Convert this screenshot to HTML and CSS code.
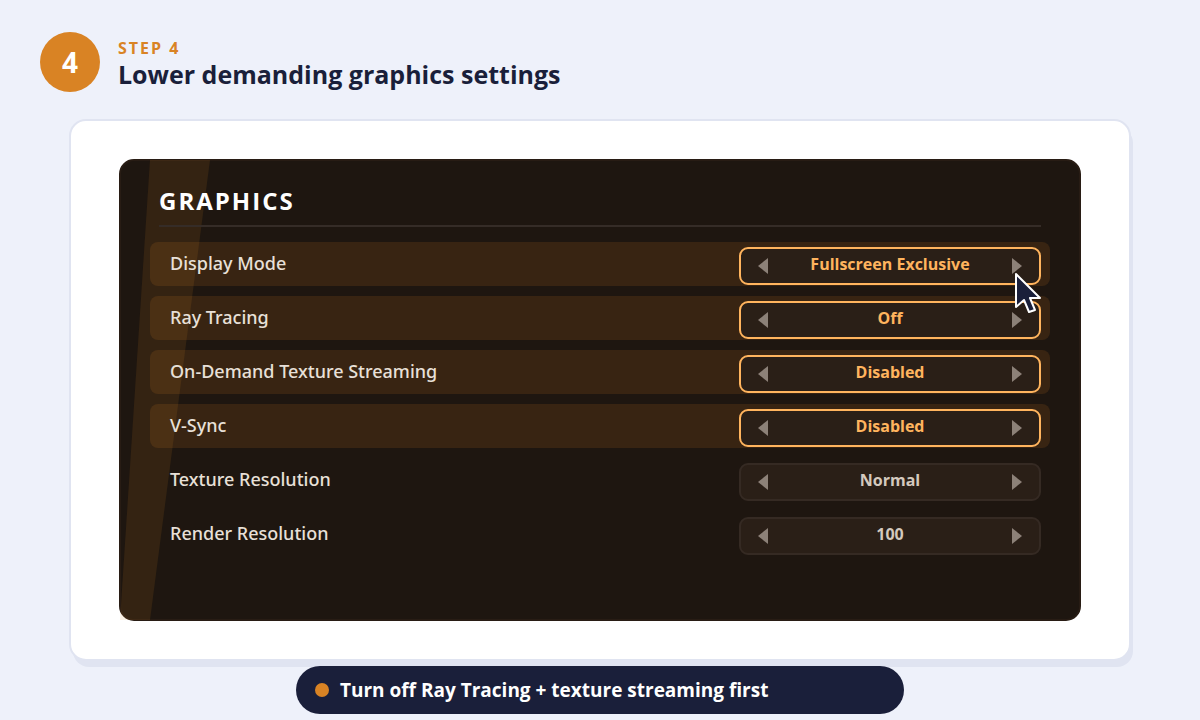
FILE: index.html
```html
<!DOCTYPE html>
<html lang="en">
<head>
    <meta charset="UTF-8">
    <meta name="viewport" content="width=device-width, initial-scale=1.0">
    <title>Step 4 - Lower demanding graphics settings</title>
    <link rel="stylesheet" href="styles.css">
</head>
<body>

    <!-- Step header -->
    <header class="step-header">
        <div class="step-number">4</div>
        <div class="step-text">
            <p class="step-label">STEP 4</p>
            <h1>Lower demanding graphics settings</h1>
        </div>
    </header>

    <!-- Settings card -->
    <main class="card">
        <section class="panel">
            <h2>GRAPHICS</h2>

            <ul class="settings">
                <li class="setting highlight">
                    <span class="setting-name" id="display-mode">Display Mode</span>
                    <div class="stepper" role="group" aria-labelledby="display-mode">
                        <button type="button" class="arrow" aria-label="Previous"><svg width="10" height="16" viewBox="0 0 10 16"><path d="M10 0v16L0 8z"/></svg></button>
                        <output>Fullscreen Exclusive</output>
                        <button type="button" class="arrow" aria-label="Next"><svg width="10" height="16" viewBox="0 0 10 16"><path d="M0 0v16l10-8z"/></svg></button>
                        <svg class="cursor" width="30" height="44" viewBox="0 0 30 44"><path d="M3 3v33l8-7 5 12 6-2-5-12h10z"/></svg>
                    </div>
                </li>
                <li class="setting highlight">
                    <span class="setting-name" id="ray-tracing">Ray Tracing</span>
                    <div class="stepper" role="group" aria-labelledby="ray-tracing">
                        <button type="button" class="arrow" aria-label="Previous"><svg width="10" height="16" viewBox="0 0 10 16"><path d="M10 0v16L0 8z"/></svg></button>
                        <output>Off</output>
                        <button type="button" class="arrow" aria-label="Next"><svg width="10" height="16" viewBox="0 0 10 16"><path d="M0 0v16l10-8z"/></svg></button>
                    </div>
                </li>
                <li class="setting highlight">
                    <span class="setting-name" id="texture-streaming">On-Demand Texture Streaming</span>
                    <div class="stepper" role="group" aria-labelledby="texture-streaming">
                        <button type="button" class="arrow" aria-label="Previous"><svg width="10" height="16" viewBox="0 0 10 16"><path d="M10 0v16L0 8z"/></svg></button>
                        <output>Disabled</output>
                        <button type="button" class="arrow" aria-label="Next"><svg width="10" height="16" viewBox="0 0 10 16"><path d="M0 0v16l10-8z"/></svg></button>
                    </div>
                </li>
                <li class="setting highlight">
                    <span class="setting-name" id="v-sync">V-Sync</span>
                    <div class="stepper" role="group" aria-labelledby="v-sync">
                        <button type="button" class="arrow" aria-label="Previous"><svg width="10" height="16" viewBox="0 0 10 16"><path d="M10 0v16L0 8z"/></svg></button>
                        <output>Disabled</output>
                        <button type="button" class="arrow" aria-label="Next"><svg width="10" height="16" viewBox="0 0 10 16"><path d="M0 0v16l10-8z"/></svg></button>
                    </div>
                </li>
                <li class="setting">
                    <span class="setting-name" id="texture-resolution">Texture Resolution</span>
                    <div class="stepper" role="group" aria-labelledby="texture-resolution">
                        <button type="button" class="arrow" aria-label="Previous"><svg width="10" height="16" viewBox="0 0 10 16"><path d="M10 0v16L0 8z"/></svg></button>
                        <output>Normal</output>
                        <button type="button" class="arrow" aria-label="Next"><svg width="10" height="16" viewBox="0 0 10 16"><path d="M0 0v16l10-8z"/></svg></button>
                    </div>
                </li>
                <li class="setting">
                    <span class="setting-name" id="render-resolution">Render Resolution</span>
                    <div class="stepper" role="group" aria-labelledby="render-resolution">
                        <button type="button" class="arrow" aria-label="Previous"><svg width="10" height="16" viewBox="0 0 10 16"><path d="M10 0v16L0 8z"/></svg></button>
                        <output>100</output>
                        <button type="button" class="arrow" aria-label="Next"><svg width="10" height="16" viewBox="0 0 10 16"><path d="M0 0v16l10-8z"/></svg></button>
                    </div>
                </li>
            </ul>
        </section>
    </main>

    <!-- Tip -->
    <p class="tip">Turn off Ray Tracing + texture streaming first</p>

</body>
</html>
```
FILE: styles.css
```css
* {
    margin: 0;
    padding: 0;
    box-sizing: border-box;
}

body {
    font-family: "Segoe UI", "Open Sans", "Noto Sans", sans-serif;
    background-color: #eef1fa;
    color: #1a1f3a;
}

/* Step header */
.step-header {
    display: flex;
    align-items: center;
    gap: 18px;
    padding: 32px 40px 27px;
}

.step-number {
    display: flex;
    align-items: center;
    justify-content: center;
    width: 60px;
    height: 60px;
    border-radius: 50%;
    background-color: #d98324; /* Orange */
    color: #fff;
    font-size: 28px;
    font-weight: 700;
}

.step-text {
    padding-top: 4px;
}

.step-label {
    color: #d98324;
    font-size: 16px;
    font-weight: 700;
    line-height: 20px;
    letter-spacing: 2px;
}

h1 {
    font-size: 25px;
    font-weight: 700;
    line-height: 32px;
}

/* White card around the panel */
.card {
    margin: 0 69px;
    padding: 38px 48px;
    background-color: #fff;
    border: 2px solid #e0e4f1;
    border-radius: 17px;
    box-shadow: 3px 7px 0 -1px #e0e4f1;
}

/* Dark settings panel */
.panel {
    position: relative;
    padding: 22px 29px 63px;
    background-color: #1e1610;
    border: 2px solid #281c14;
    border-radius: 15px;
}

/* Slanted band of light behind the rows */
.panel::before {
    content: "";
    position: absolute;
    inset: -1px auto -1px -1px;
    width: 90px;
    background-color: rgba(217, 131, 36, 0.12);
    clip-path: polygon(30px 0, 90px 0, 30px 100%, 0 100%);
}

h2 {
    position: relative;
    margin: 0 9px 15px;
    padding-bottom: 6px;
    border-bottom: 2px solid #352c27;
    color: #fff;
    font-size: 24px;
    font-weight: 700;
    line-height: 36px;
    letter-spacing: 2px;
}

/* Setting rows */
.settings {
    position: relative;
    display: flex;
    flex-direction: column;
    gap: 10px;
    list-style: none;
}

.setting {
    display: flex;
    align-items: center;
    justify-content: space-between;
    padding: 5px 9px 1px 20px;
    border-radius: 8px;
}

.setting.highlight {
    background-color: rgba(217, 131, 36, 0.14);
}

.setting-name {
    padding-bottom: 6px;
    color: #e8e0d8;
    font-family: "Segoe UI", "Noto Sans", sans-serif;
    font-size: 18px;
    font-weight: 500;
    line-height: 24px;
}

.stepper {
    position: relative;
    display: flex;
    align-items: center;
    width: 302px;
    height: 38px;
    padding: 0 11px;
    background-color: #2a1f17;
    border: 2px solid #352a23;
    border-radius: 9px;
}

.stepper output {
    flex: 1;
    padding-bottom: 4px;
    color: #d4c9be;
    font-size: 16px;
    font-weight: 700;
    line-height: 22px;
    text-align: center;
}

.highlight .stepper {
    border-color: #ffb45e;
}

.highlight output {
    color: #ffb45e;
}

.arrow {
    display: flex;
    align-items: center;
    justify-content: center;
    width: 22px;
    height: 30px;
    background: none;
    border: none;
    cursor: pointer;
}

.arrow svg {
    fill: #8c8178;
}

/* Mouse pointer over the first setting */
.cursor {
    position: absolute;
    top: 22px;
    right: -4px;
    z-index: 1;
    fill: #1a1f3a;
    stroke: #fff;
    stroke-width: 2;
    stroke-linejoin: round;
}

/* Tip pill */
.tip {
    display: flex;
    align-items: center;
    gap: 11px;
    max-width: 608px;
    margin: 5px auto 6px;
    padding: 10px 19px;
    background-color: #1a1f3a;
    border-radius: 24px;
    color: #fff;
    font-size: 19px;
    font-weight: 700;
    line-height: 28px;
}

.tip::before {
    content: "";
    width: 14px;
    height: 14px;
    border-radius: 50%;
    background-color: #d98324;
}
```
